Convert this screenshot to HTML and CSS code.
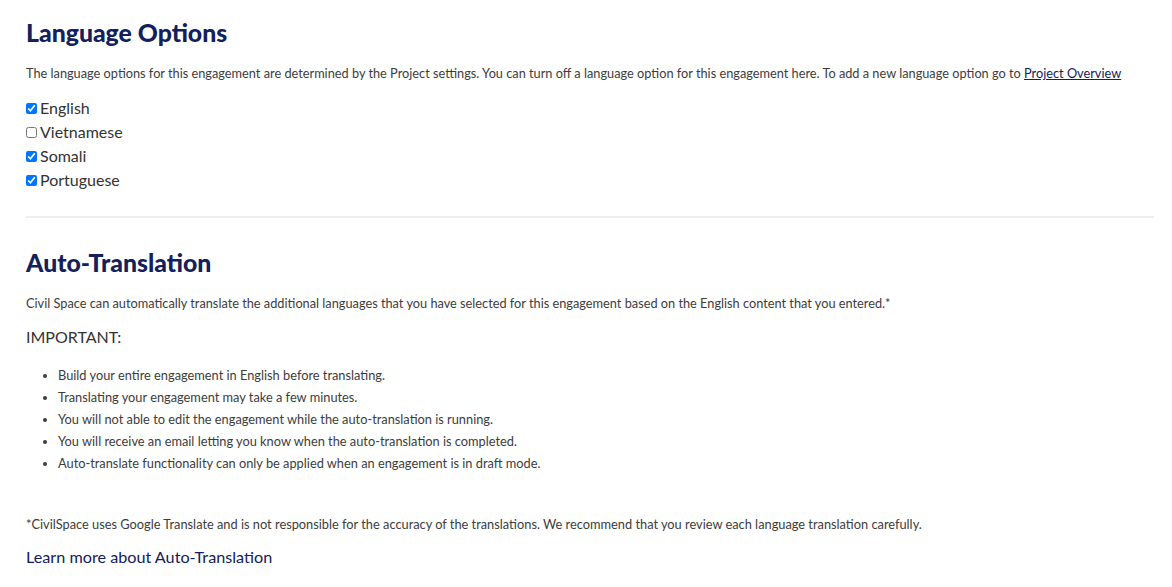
FILE: index.html
```html
<!DOCTYPE html>
<html>
<head>
<meta charset="UTF-8">
<title>Language Options</title>
<link rel="stylesheet" href="styles.css">
</head>
<body>
<div id="wrapper">
	<div class="section">
		<h1>Language Options</h1>
		<p class="note">The language options for this engagement are determined by the Project settings. You can turn off a language option for this engagement here. To add a new language option go to <a href="#">Project Overview</a></p>
		<ul class="languages">
			<li><label><input type="checkbox" checked>English</label></li>
			<li><label><input type="checkbox">Vietnamese</label></li>
			<li><label><input type="checkbox" checked>Somali</label></li>
			<li><label><input type="checkbox" checked>Portuguese</label></li>
		</ul>
	</div><!-- end of language options -->

	<hr>

	<div class="section">
		<h1>Auto-Translation</h1>
		<p class="note">Civil Space can automatically translate the additional languages that you have selected for this engagement based on the English content that you entered.*</p>
		<h3>IMPORTANT:</h3>
		<ul class="important">
			<li>Build your entire engagement in English before translating.</li>
			<li>Translating your engagement may take a few minutes.</li>
			<li>You will not able to edit the engagement while the auto-translation is running.</li>
			<li>You will receive an email letting you know when the auto-translation is completed.</li>
			<li>Auto-translate functionality can only be applied when an engagement is in draft mode.</li>
		</ul>
		<p class="note footnote">*CivilSpace uses Google Translate and is not responsible for the accuracy of the translations. We recommend that you review each language translation carefully.</p>
		<a class="learn" href="#">Learn more about Auto-Translation</a>
	</div><!-- end of auto-translation -->
</div><!-- end of wrapper -->
</body>
</html>
```

FILE: styles.css
```css
body{
	font-family:Lato, "Liberation Sans", sans-serif;
	color:#333;
	margin:0;
	padding:0;
	background:#fff;
}
#wrapper{
	padding:17px 18px 0 26px;
}
h1{
	font-size:24.8px;
	font-weight:900;
	color:#13205a;
	margin:0;
	line-height:32px;
}
.note{
	font-size:12.75px;
	line-height:18px;
	margin:15px 0 0 0;
	color:#3c3c3c;
}
.note a{
	color:#13205a;
}
.languages{
	list-style:none;
	padding:0;
	margin:14px 0 0 0;
}
.languages li{
	font-size:16px;
	line-height:24px;
	color:#333;
}
.languages label{
	display:flex;
	align-items:center;
}
.languages input{
	width:11px;
	height:11px;
	margin:0 3px 0 0;
}
hr{
	border:0;
	border-top:2px solid #eee;
	margin:24px 0 0 0;
}
.section + hr + .section{
	padding-top:29px;
}
h3{
	font-size:16px;
	font-weight:normal;
	margin:15px 0 0 0;
	line-height:20px;
	color:#333;
}
.important{
	margin:17px 0 0 0;
	padding-left:32px;
	font-size:12.8px;
	color:#3c3c3c;
}
.important li{
	line-height:22px;
}
.section + hr + .section .footnote{
	margin-top:41px;
	font-size:12.8px;
}
.learn{
	display:inline-block;
	margin-top:14px;
	font-size:16.2px;
	color:#13205a;
	text-decoration:none;
}
```
